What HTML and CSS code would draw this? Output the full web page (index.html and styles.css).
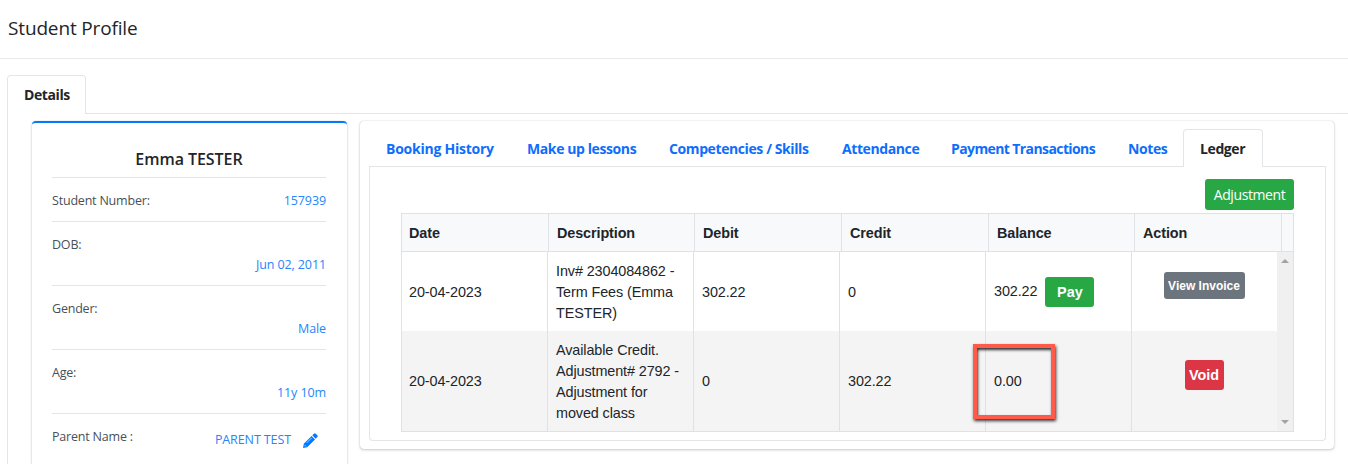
FILE: index.html
```html
<!DOCTYPE html>
<html lang="en">
<head>
    <meta charset="UTF-8">
    <meta name="viewport" content="width=device-width, initial-scale=1.0">
    <title>Student Profile</title>
    <link rel="stylesheet" href="styles.css">
</head>
<body>
    <header class="page-header">
        <h1 class="page-title">Student Profile</h1>
    </header>
    <div class="page">
        <nav class="tabs main-tabs">
            <a class="tab active">Details</a>
        </nav>
        <div class="tab-content">
            <aside class="profile-card">
                <h2 class="profile-name">Emma TESTER</h2>
                <ul class="profile-list">
                    <li class="profile-item inline"><span class="label">Student Number:</span><a class="value">157939</a></li>
                    <li class="profile-item"><span class="label">DOB:</span><a class="value">Jun 02, 2011</a></li>
                    <li class="profile-item"><span class="label">Gender:</span><a class="value">Male</a></li>
                    <li class="profile-item"><span class="label">Age:</span><a class="value">11y 10m</a></li>
                    <li class="profile-item inline parent"><span class="label">Parent Name :</span>
                        <a class="value parent-link">PARENT TEST
                            <svg class="pencil" viewBox="0 0 15 15"><path fill="currentColor" d="M9.300 2.300L10.900.7Q11.800-.1 12.700.7L14.300 2.300Q15.100 3.200 14.300 4.100L12.700 5.700ZM8.600 3L12 6.400 4.200 14.200 0 15 .8 10.800Z"/><path fill="none" stroke="#fff" stroke-width=".6" d="M3.800 9.800L8.700 4.900M1.500 12L3 13.500"/></svg>
                        </a>
                    </li>
                </ul>
            </aside>
            <main class="record-card">
                <nav class="tabs record-tabs">
                    <a class="tab tab-booking">Booking History</a>
                    <a class="tab tab-makeup">Make up lessons</a>
                    <a class="tab tab-skills">Competencies / Skills</a>
                    <a class="tab tab-attendance">Attendance</a>
                    <a class="tab tab-payment">Payment Transactions</a>
                    <a class="tab tab-notes">Notes</a>
                    <a class="tab tab-ledger active">Ledger</a>
                </nav>
                <section class="ledger">
                    <button class="btn btn-adjust">Adjustment</button>
                    <div class="grid">
                        <div class="grid-header">
                            <div>Date</div>
                            <div>Description</div>
                            <div>Debit</div>
                            <div>Credit</div>
                            <div>Balance</div>
                            <div>Action</div>
                            <div></div>
                        </div>
                        <div class="grid-body">
                            <div class="grid-rows">
                                <div class="grid-row">
                                    <div class="cell">20-04-2023</div>
                                    <div class="cell">Inv# 2304084862 -<br>Term Fees (Emma<br>TESTER)</div>
                                    <div class="cell">302.22</div>
                                    <div class="cell">0</div>
                                    <div class="cell cell-pay">302.22<button class="btn btn-pay">Pay</button></div>
                                    <div class="cell cell-action"><button class="btn btn-view">View Invoice</button></div>
                                </div>
                                <div class="grid-row alt">
                                    <div class="cell">20-04-2023</div>
                                    <div class="cell">Available Credit.<br>Adjustment# 2792 -<br>Adjustment for<br>moved class</div>
                                    <div class="cell">0</div>
                                    <div class="cell">302.22</div>
                                    <div class="cell cell-marked">0.00<span class="marker"></span></div>
                                    <div class="cell cell-action"><button class="btn btn-void">Void</button></div>
                                </div>
                            </div>
                            <div class="scrollbar">
                                <span class="arrow-up"></span>
                                <span class="arrow-down"></span>
                            </div>
                        </div>
                    </div>
                </section>
            </main>
        </div>
    </div>
</body>
</html>
```
FILE: styles.css
```css
* {
    box-sizing: border-box;
}

body {
    margin: 0;
    background-color: #fff;
    color: #212529;
    font-family: 'Open Sans', 'Noto Sans', sans-serif;
    font-size: 14px;
}

.page-header {
    height: 59px;
    padding: 13px 8px;
    border-bottom: 1px solid #e9e9ea;
}

.page-title {
    margin: 0;
    font-size: 19px;
    font-weight: 400;
    line-height: 30px;
    letter-spacing: -0.15px;
}

.page {
    padding: 16px 0 0 7px;
}

.tabs {
    display: flex;
    border-bottom: 1px solid #e3e6e9;
}

.tab {
    height: 38px;
    padding: 0 16px;
    border: 1px solid transparent;
    border-bottom: 0;
    border-radius: 4px 4px 0 0;
    color: #0d6efd;
    font-weight: 700;
    line-height: 38px;
    letter-spacing: -0.4px;
    white-space: nowrap;
}

.tab.active {
    margin-bottom: -1px;
    height: 39px;
    border-color: #e3e6e9;
    background-color: #fff;
    color: #212529;
}

.main-tabs .tab {
    width: 79px;
}

.tab-content {
    display: flex;
    align-items: flex-start;
    gap: 13px;
    height: 350px;
    padding: 7px 12px 0 24px;
    border-left: 1px solid #e3e6e9;
}

.profile-card {
    width: 315px;
    height: 343px;
    padding: 0 21px 0 20px;
    border-top: 2px solid #007bff;
    border-radius: 4px 4px 0 0;
    box-shadow: 0 0 1px rgba(0, 0, 0, 0.2), 0 1px 3px rgba(0, 0, 0, 0.2);
}

.profile-name {
    margin: 0;
    padding-top: 25px;
    height: 55px;
    border-bottom: 1px solid #e4e5e6;
    font-size: 16px;
    font-weight: 600;
    line-height: 23px;
    letter-spacing: -0.05px;
    text-align: center;
}

.profile-list {
    margin: 0;
    padding: 0;
    list-style: none;
}

.profile-item {
    display: flex;
    flex-direction: column;
    padding: 13px 0 10px;
    border-bottom: 1px solid #e4e5e6;
    font-size: 12.5px;
    line-height: 20px;
}

.profile-item.inline {
    flex-direction: row;
    justify-content: space-between;
}

.profile-item.parent {
    border-bottom: 0;
}

.label {
    color: #495057;
    letter-spacing: -0.2px;
}

.value {
    align-self: flex-end;
    color: #2586fc;
    letter-spacing: -0.1px;
}

.parent-link {
    display: flex;
    align-items: center;
    gap: 12px;
    padding: 3px 8px 0 0;
}

.pencil {
    width: 15px;
    height: 15px;
    margin-top: 1px;
    color: #007bff;
}

.record-card {
    width: 974px;
    height: 328px;
    padding: 8px 8px 0 9px;
    border-radius: 4px;
    box-shadow: 0 0 1px rgba(0, 0, 0, 0.25), 0 1px 3px rgba(0, 0, 0, 0.2);
}

.record-tabs .tab {
    height: 37px;
}

.record-tabs .tab.active {
    height: 38px;
}

.record-tabs .tab-booking {
    width: 141px;
    letter-spacing: -0.25px;
}

.tab-makeup {
    width: 142px;
}

.tab-skills {
    width: 173px;
}

.tab-attendance {
    width: 109px;
}

.record-tabs .tab-payment {
    width: 177px;
    letter-spacing: -0.6px;
}

.tab-notes {
    width: 72px;
}

.tab-ledger {
    width: 80px;
}

.ledger {
    display: flex;
    flex-direction: column;
    height: 274px;
    padding: 12px 31px 0;
    border: 1px solid #e3e6e9;
    border-top: 0;
    border-radius: 0 0 4px 4px;
}

.btn {
    border: 0;
    border-radius: 3px;
    padding: 0;
    color: #fff;
    font-family: 'Liberation Sans', Arial, sans-serif;
    font-weight: 700;
}

.btn-adjust {
    align-self: flex-end;
    width: 89px;
    height: 31px;
    background-color: #28a745;
    font-family: 'Open Sans', 'Noto Sans', sans-serif;
    font-size: 14px;
    font-weight: 400;
    letter-spacing: -0.4px;
}

.grid {
    margin-top: 3px;
    height: 219px;
    border: 1px solid #dee2e6;
    font-family: 'Liberation Sans', Arial, sans-serif;
    font-size: 14.4px;
}

.grid-header {
    display: grid;
    grid-template-columns: 147px 146px 147px 147px 146px 147px 1fr;
    height: 38px;
    border-bottom: 1px solid #dee2e6;
    background-color: #f8f9fb;
    font-weight: 700;
    line-height: 38px;
    letter-spacing: -0.1px;
}

.grid-header div {
    padding-left: 8px;
    border-right: 1px solid #dee2e6;
}

.grid-header div:first-child,
.grid-row .cell:first-child {
    padding-left: 7px;
}

.grid-header div:last-child {
    border-right: 0;
}

.grid-body {
    display: flex;
    height: 179px;
}

.grid-rows {
    flex: 1;
}

.grid-row {
    display: grid;
    grid-template-columns: 146px 146px 146px 146px 146px 1fr;
    height: 79px;
    letter-spacing: -0.1px;
}

.grid-row.alt {
    height: 100px;
    background-color: #f4f4f4;
}

.cell {
    display: flex;
    align-items: center;
    padding: 2px 0 0 8px;
    border-right: 1px solid #dee2e6;
    line-height: 21.2px;
    white-space: nowrap;
}

.cell-pay {
    padding-top: 0;
}

.grid-row .cell-action {
    justify-content: center;
    padding: 0;
    border-right: 0;
}

.btn-pay {
    width: 49px;
    height: 30px;
    margin-left: 8px;
    background-color: #28a745;
    font-size: 14.4px;
}

.btn-view {
    width: 81px;
    height: 27px;
    margin: 0 1px 12px 0;
    background-color: #6c757d;
    font-size: 12px;
}

.btn-void {
    width: 39px;
    height: 30px;
    margin: 0 1px 12px 0;
    background-color: #dc3545;
    font-size: 14.4px;
}

.cell-marked {
    position: relative;
}

/* highlight drawn over the balance cell */
.marker {
    position: absolute;
    top: 13px;
    left: -13px;
    width: 82px;
    height: 75px;
    border: 4px solid #ff5a4a;
    box-shadow: 1px 2px 3px rgba(0, 0, 0, 0.8), inset 1px 2px 3px rgba(0, 0, 0, 0.8);
}

.scrollbar {
    display: flex;
    flex-direction: column;
    justify-content: space-between;
    align-items: center;
    width: 16px;
    padding: 7px 0;
    background-color: #f0f0f0;
}

.arrow-up,
.arrow-down {
    border: 4px solid transparent;
    border-top-width: 0;
    border-bottom: 4px solid #a3a3a3;
}

.arrow-down {
    border-top: 4px solid #a3a3a3;
    border-bottom-width: 0;
}
```
